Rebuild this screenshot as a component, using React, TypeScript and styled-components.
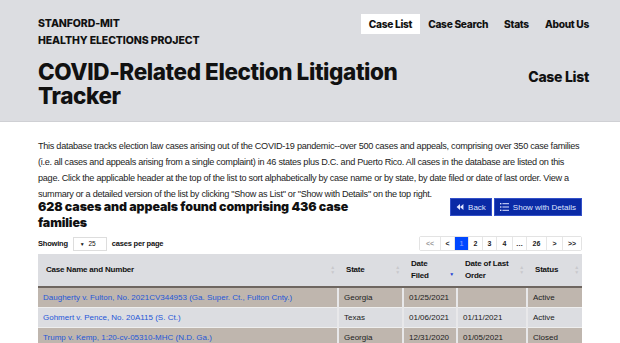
import styled, { createGlobalStyle } from "styled-components";

const GlobalStyle = createGlobalStyle`
  html, body {
    margin: 0;
    padding: 0;
    background: #ffffff;
    font-family: "Liberation Sans", Arial, sans-serif;
    color: #111;
  }
  * { box-sizing: border-box; }
`;

const Banner = styled.header`
  background: #dcdde1;
  height: 122px;
  padding: 14px 31px 0 38px;
  border-bottom: 1px solid #cfd0d4;
  font-family: Inter, "Liberation Sans", Arial, sans-serif;
`;

const TopRow = styled.div`
  display: flex;
  justify-content: space-between;
  align-items: flex-start;
`;

const Brand = styled.div`
  font-size: 10.5px;
  font-weight: 800;
  letter-spacing: -0.1px;
  line-height: 17px;
  text-transform: uppercase;
  padding-top: 1px;
`;

const Nav = styled.nav`
  display: flex;
  margin-right: -8px;
`;

const NavItem = styled.a<{ $active?: boolean }>`
  font-size: 10.2px;
  font-weight: 800;
  letter-spacing: -0.3px;
  padding: 3px 8px;
  height: 20px;
  line-height: 14px;
  color: #111;
  background: ${(p) => (p.$active ? "#ffffff" : "transparent")};
`;

const TitleRow = styled.div`
  display: flex;
  justify-content: space-between;
  align-items: flex-start;
  margin-top: 11px;
`;

const Title = styled.h1`
  margin: 0;
  font-size: 22.5px;
  font-weight: 800;
  letter-spacing: -0.4px;
  line-height: 24px;
  width: 380px;
`;

const PageName = styled.div`
  font-size: 14px;
  font-weight: 800;
  letter-spacing: -0.3px;
  margin-top: 8px;
`;

const Main = styled.main`
  padding: 16px 38px 0 38px;
`;

const Intro = styled.p`
  margin: 0;
  font-size: 9.15px;
  line-height: 16px;
  color: #1c1c1c;
  letter-spacing: -0.28px;
`;

const ResultsRow = styled.div`
  display: flex;
  justify-content: space-between;
  align-items: flex-start;
  margin-top: -3px;
`;

const Results = styled.h2`
  margin: 0;
  font-family: Inter, "Liberation Sans", Arial, sans-serif;
  font-size: 12.4px;
  font-weight: 900;
  line-height: 16px;
  width: 330px;
  letter-spacing: -0.1px;
`;

const ButtonGroup = styled.div`
  display: flex;
  gap: 2px;
  margin-top: -1px;
`;

const BlueButton = styled.button`
  display: flex;
  align-items: center;
  gap: 4px;
  height: 18px;
  padding: 0 5px;
  border: 1px solid #3350c9;
  background: #0a2aa6;
  color: #dfe4ff;
  font-family: "Liberation Sans", Arial, sans-serif;
  font-size: 8px;
  font-weight: 400;
  cursor: pointer;
`;

const ControlsRow = styled.div`
  display: flex;
  justify-content: space-between;
  align-items: center;
  margin-top: 5px;
`;

const Showing = styled.div`
  display: flex;
  align-items: center;
  gap: 5px;
  font-size: 7.5px;
  font-weight: 700;
  letter-spacing: -0.2px;
`;

const SelectBox = styled.div`
  width: 34px;
  height: 14px;
  border: 1px solid #ddd;
  display: flex;
  align-items: center;
  gap: 4px;
  padding-left: 6px;
  font-size: 6.5px;
  font-weight: 400;
`;

const Caret = styled.span`
  font-size: 5px;
`;

const Pager = styled.div`
  display: flex;
  border: 1px solid #e3e3e3;
  border-radius: 2px;
`;

const PageBtn = styled.span<{ $active?: boolean; $w: number }>`
  width: ${(p) => p.$w}px;
  height: 13px;
  display: flex;
  align-items: center;
  justify-content: center;
  font-size: 7px;
  font-weight: 700;
  color: ${(p) => (p.$active ? "#6f8dff" : "#222")};
  background: ${(p) => (p.$active ? "#0047ff" : "#fff")};
  border-left: 1px solid #e6e6e6;
  &:first-child { border-left: none; color: #999; }
`;

const Table = styled.table`
  width: 100%;
  border-collapse: collapse;
  table-layout: fixed;
  margin-top: 3px;
`;

const Th = styled.th<{ $w: number }>`
  width: ${(p) => p.$w}px;
  height: 33px;
  background: #dcdde1;
  text-align: left;
  font-weight: 700;
  font-size: 8px;
  line-height: 12px;
  padding: 0 12px 0 8px;
  position: relative;
  border-bottom: 2px solid #6e6660;
  letter-spacing: -0.2px;
`;

const SortMark = styled.span<{ $on?: boolean }>`
  position: absolute;
  right: 3px;
  top: ${(p) => (p.$on ? "62%" : "50%")};
  transform: translateY(-50%);
  font-size: 5px;
  line-height: 5px;
  color: ${(p) => (p.$on ? "#1a3fd6" : "#c8c8cc")};
  display: flex;
  flex-direction: column;
`;

const Tr = styled.tr<{ $tan?: boolean }>`
  background: ${(p) => (p.$tan ? "#bfb6ae" : "#dcdde1")};
`;

const Td = styled.td`
  height: 20px;
  padding: 0 5px;
  font-size: 8px;
  color: #222;
  white-space: nowrap;
  overflow: hidden;
  border-left: 2px solid #e8e8ea;
  border-bottom: 1px solid #eeeeee;
  &:first-child { border-left: none; }
`;

const CaseLink = styled.a`
  color: #1f57d8;
  text-decoration: none;
`;

const BackIcon = () => (
  <svg width="8" height="6" viewBox="0 0 8 7">
    <path d="M4 0 L0 3.5 L4 7 Z M8 0 L4 3.5 L8 7 Z" fill="#dfe4ff" />
  </svg>
);

const ListIcon = () => (
  <svg width="9" height="8" viewBox="0 0 9 8" fill="#dfe4ff">
    <rect x="0" y="0" width="1.4" height="1.4" />
    <rect x="2.4" y="0.2" width="6.6" height="1" />
    <rect x="0" y="3.3" width="1.4" height="1.4" />
    <rect x="2.4" y="3.5" width="6.6" height="1" />
    <rect x="0" y="6.6" width="1.4" height="1.4" />
    <rect x="2.4" y="6.8" width="6.6" height="1" />
  </svg>
);

const Sort = ({ on }: { on?: boolean }) =>
  on ? (
    <SortMark $on>▼</SortMark>
  ) : (
    <SortMark>
      <span>▲</span>
      <span>▼</span>
    </SortMark>
  );

const pages: [string, number, boolean?][] = [
  ["<<", 20],
  ["<", 14],
  ["1", 14, true],
  ["2", 14],
  ["3", 14],
  ["4", 16],
  ["…", 14],
  ["26", 20],
  [">", 16],
  [">>", 19],
];

const rows = [
  {
    name: "Daugherty v. Fulton, No. 2021CV344953 (Ga. Super. Ct., Fulton Cnty.)",
    state: "Georgia",
    filed: "01/25/2021",
    last: "",
    status: "Active",
  },
  {
    name: "Gohmert v. Pence, No. 20A115 (S. Ct.)",
    state: "Texas",
    filed: "01/06/2021",
    last: "01/11/2021",
    status: "Active",
  },
  {
    name: "Trump v. Kemp, 1:20-cv-05310-MHC (N.D. Ga.)",
    state: "Georgia",
    filed: "12/31/2020",
    last: "01/05/2021",
    status: "Closed",
  },
];

export default function App() {
  return (
    <>
      <GlobalStyle />
      <Banner>
        <TopRow>
          <Brand>
            Stanford-MIT
            <br />
            Healthy Elections Project
          </Brand>
          <Nav>
            <NavItem $active>Case List</NavItem>
            <NavItem>Case Search</NavItem>
            <NavItem>Stats</NavItem>
            <NavItem>About Us</NavItem>
          </Nav>
        </TopRow>
        <TitleRow>
          <Title>COVID-Related Election Litigation Tracker</Title>
          <PageName>Case List</PageName>
        </TitleRow>
      </Banner>
      <Main>
        <Intro>
          This database tracks election law cases arising out of the COVID-19 pandemic--over 500 cases and
          appeals, comprising over 350 case families (i.e. all cases and appeals arising from a single
          complaint) in 46 states plus D.C. and Puerto Rico. All cases in the database are listed on this
          page. Click the applicable header at the top of the list to sort alphabetically by case name or by
          state, by date filed or date of last order. View a summary or a detailed version of the list by
          clicking "Show as List" or "Show with Details" on the top right.
        </Intro>
        <ResultsRow>
          <Results>628 cases and appeals found comprising 436 case families</Results>
          <ButtonGroup>
            <BlueButton>
              <BackIcon /> Back
            </BlueButton>
            <BlueButton>
              <ListIcon /> Show with Details
            </BlueButton>
          </ButtonGroup>
        </ResultsRow>
        <ControlsRow>
          <Showing>
            Showing
            <SelectBox>
              <Caret>▼</Caret>25
            </SelectBox>
            cases per page
          </Showing>
          <Pager>
            {pages.map(([label, w, active]) => (
              <PageBtn key={label} $w={w} $active={active}>
                {label}
              </PageBtn>
            ))}
          </Pager>
        </ControlsRow>
        <Table>
          <thead>
            <tr>
              <Th $w={300}>
                Case Name and Number
                <Sort />
              </Th>
              <Th $w={65}>
                State
                <Sort />
              </Th>
              <Th $w={54}>
                Date
                <br />
                Filed
                <Sort on />
              </Th>
              <Th $w={70}>
                Date of Last
                <br />
                Order
                <Sort />
              </Th>
              <Th $w={55}>
                Status
                <Sort />
              </Th>
            </tr>
          </thead>
          <tbody>
            {rows.map((r, i) => (
              <Tr key={r.name} $tan={i % 2 === 0}>
                <Td>
                  <CaseLink>{r.name}</CaseLink>
                </Td>
                <Td>{r.state}</Td>
                <Td>{r.filed}</Td>
                <Td>{r.last}</Td>
                <Td>{r.status}</Td>
              </Tr>
            ))}
          </tbody>
        </Table>
      </Main>
    </>
  );
}
